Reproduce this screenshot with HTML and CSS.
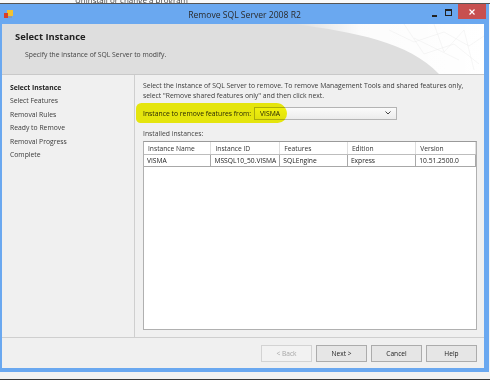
FILE: index.html
```html
<!DOCTYPE html>
<html lang="en">
<head>
  <meta charset="UTF-8" />
  <title>Remove SQL Server 2008 R2</title>
  <link rel="stylesheet" href="styles.css">
</head>
<body>

<div class="behind"><span>Uninstall or change a program</span></div>

<div class="window">
  <div class="titlebar">
    <svg class="app-icon" width="9" height="9" viewBox="0 0 9 9">
      <rect x="3" y="0" width="6" height="6" fill="#f2c230"/>
      <rect x="0" y="3" width="4" height="5" fill="#d8402a"/>
      <rect x="4" y="6" width="4" height="2" fill="#8a9bb0"/>
    </svg>
    <span class="title">Remove SQL Server 2008 R2</span>
    <div class="controls">
      <span class="ctl-min"></span>
      <span class="ctl-max"></span>
      <span class="ctl-close">
        <svg width="6" height="6" viewBox="0 0 6 6"><path d="M0.5 0.5 L5.5 5.5 M5.5 0.5 L0.5 5.5" stroke="#fff" stroke-width="1.2"/></svg>
      </span>
    </div>
  </div>

  <div class="client">
    <div class="banner">
      <svg class="swoosh" width="190" height="50" viewBox="0 0 190 50" preserveAspectRatio="none">
        <defs>
          <linearGradient id="fade" x1="0" y1="0" x2="1" y2="0">
            <stop offset="0" stop-color="#fff" stop-opacity="0"/>
            <stop offset="0.35" stop-color="#fff" stop-opacity="0.9"/>
            <stop offset="1" stop-color="#fff" stop-opacity="1"/>
          </linearGradient>
        </defs>
        <path d="M0 0 C60 8, 115 18, 145 50 L190 50 L190 0 Z" fill="url(#fade)"/>
        <path d="M95 6 L120 18 L150 8 L175 22 L190 12 M110 0 L130 30 L160 20 L185 40 M140 0 L150 28 L170 6 L180 46 M120 14 L165 36" stroke="#ececec" stroke-width="0.5" fill="none"/>
      </svg>
      <h1>Select Instance</h1>
      <p>Specify the instance of SQL Server to modify.</p>
    </div>

    <div class="body">
      <ul class="steps">
        <li class="current">Select Instance</li>
        <li>Select Features</li>
        <li>Removal Rules</li>
        <li>Ready to Remove</li>
        <li>Removal Progress</li>
        <li>Complete</li>
      </ul>

      <div class="main">
        <p class="intro">Select the instance of SQL Server to remove. To remove Management Tools and shared features only,<br>select "Remove shared features only" and then click next.</p>

        <div class="pick-row">
          <span class="marker"></span>
          <label>Instance to remove features from:</label>
          <div class="combo">
            <span>VISMA</span>
            <svg width="6" height="4" viewBox="0 0 6 4"><path d="M0.5 0.5 L3 3 L5.5 0.5" stroke="#444" stroke-width="1" fill="none"/></svg>
          </div>
        </div>

        <div class="caption">Installed instances:</div>

        <div class="grid">
          <table>
            <thead>
              <tr>
                <th class="c1">Instance Name</th>
                <th class="c2">Instance ID</th>
                <th class="c3">Features</th>
                <th class="c4">Edition</th>
                <th class="c5">Version</th>
              </tr>
            </thead>
            <tbody>
              <tr>
                <td>VISMA</td>
                <td>MSSQL10_50.VISMA</td>
                <td>SQLEngine</td>
                <td>Express</td>
                <td>10.51.2500.0</td>
              </tr>
            </tbody>
          </table>
        </div>
      </div>
    </div>

    <div class="footer">
      <button disabled>&lt; Back</button>
      <button>Next &gt;</button>
      <button>Cancel</button>
      <button>Help</button>
    </div>
  </div>
</div>

<div class="desk"></div>

</body>
</html>
```

FILE: styles.css
```css
body {
  margin: 0;
  width: 490px;
  height: 380px;
  overflow: hidden;
  background: #f4f4f4;
  font-family: 'Open Sans', 'DejaVu Sans', sans-serif;
  font-size: 6.8px;
  color: #333;
}

.behind {
  height: 3px;
  overflow: hidden;
  background: #fafafa;
  border-bottom: 1px solid #555;
  padding-left: 75px;
}

.behind span {
  display: block;
  margin-top: -6px;
  font-size: 8px;
  color: #444;
}

.window {
  width: 489px;
  background: #6aa8f0;
  display: flex;
  flex-direction: column;
}

.titlebar {
  height: 20px;
  display: flex;
  align-items: flex-start;
  position: relative;
}

.app-icon {
  margin: 6px 0 0 4px;
}

.titlebar .title {
  position: absolute;
  left: 0;
  right: 0;
  top: 5px;
  text-align: center;
  font-size: 8.6px;
  color: #2a2a2a;
}

.controls {
  margin-left: auto;
  display: flex;
  align-items: flex-start;
  margin-right: 3px;
}

.ctl-min {
  width: 5px;
  height: 2px;
  background: #222;
  margin: 11px 8px 0 0;
}

.ctl-max {
  width: 5px;
  height: 4px;
  border: 1px solid #222;
  border-top-width: 2px;
  margin: 5px 6px 0 0;
}

.ctl-close {
  width: 28px;
  height: 15px;
  background: #c75050;
  display: flex;
  align-items: center;
  justify-content: center;
}

.client {
  margin: 0 5px 4px 2px;
  background: #f0f0f0;
  display: flex;
  flex-direction: column;
}

.banner {
  height: 50px;
  background: #dedede;
  border-bottom: 1px solid #c9c9c9;
  position: relative;
  overflow: hidden;
}

.swoosh {
  position: absolute;
  right: 0;
  top: 0;
}

.banner h1 {
  position: relative;
  margin: 0;
  padding: 6px 0 0 13px;
  font-size: 9.4px;
  font-weight: bold;
  color: #222;
}

.banner p {
  position: relative;
  margin: 7px 0 0 23px;
  font-size: 6.8px;
  color: #444;
}

.body {
  height: 262px;
  display: flex;
}

.steps {
  list-style: none;
  margin: 0;
  padding: 6px 0 0 8px;
  width: 124px;
  border-right: 1px solid #cfcfcf;
}

.steps li {
  height: 13.4px;
  line-height: 13.4px;
  color: #3a3a3a;
}

.steps li.current {
  font-weight: bold;
  color: #222;
}

.main {
  flex: 1;
  padding: 6px 7px 7px 8px;
  display: flex;
  flex-direction: column;
}

.intro {
  margin: 0;
  line-height: 10px;
  color: #3a3a3a;
}

.pick-row {
  position: relative;
  display: flex;
  align-items: center;
  margin-top: 4px;
  height: 16px;
}

.marker {
  position: absolute;
  left: -7px;
  top: -2px;
  width: 151px;
  height: 20px;
  background: #f4f400;
  border-radius: 7px 14px 12px 6px;
  mix-blend-mode: multiply;
  opacity: 0.95;
}

.pick-row label {
  width: 111px;
  color: #2a2a2a;
}

.combo {
  height: 13px;
  border: 1px solid #b4b4b4;
  background: linear-gradient(#fbfbfb, #ececec);
  display: flex;
  align-items: center;
  justify-content: space-between;
  padding: 0 5px;
  box-sizing: border-box;
  width: 143px;
}

.combo span {
  color: #222;
}

.caption {
  margin-top: 8px;
  height: 12px;
  color: #444;
}

.grid {
  flex: 1;
  background: #fff;
  border: 1px solid #b0b0b0;
  border-top-color: #9a9a9a;
}

.grid table {
  border-collapse: collapse;
  font-size: 6.7px;
}

.grid th {
  font-weight: normal;
  text-align: left;
  height: 12px;
  padding: 0 0 0 4px;
  border-right: 1px solid #dedede;
  border-bottom: 1px solid #bdbdbd;
  color: #333;
}

.grid td {
  height: 11px;
  padding: 0 0 0 3px;
  border: 1px solid #a8a8a8;
  border-top: none;
  border-left: none;
  color: #222;
  white-space: nowrap;
}

.grid .c1 { width: 63px; }
.grid .c2 { width: 64px; }
.grid .c3 { width: 63px; }
.grid .c4 { width: 64px; }
.grid .c5 { width: 55px; }

.footer {
  height: 31px;
  border-top: 1px solid #cfcfcf;
  display: flex;
  justify-content: flex-end;
  align-items: flex-start;
  gap: 4px;
  padding: 7px 7px 0 0;
  box-sizing: border-box;
}

.footer button {
  width: 51px;
  height: 17px;
  margin: 0;
  padding: 0;
  font-family: inherit;
  font-size: 6.6px;
  color: #222;
  background: #e6e6e6;
  border: 1px solid #acacac;
}

.footer button:disabled {
  color: #a6a6a6;
  background: #f2f2f2;
  border-color: #d3d3d3;
}

.desk {
  height: 7px;
  background: #f2f2f2;
  border-bottom: 2px solid #3a3a3a;
}
```
